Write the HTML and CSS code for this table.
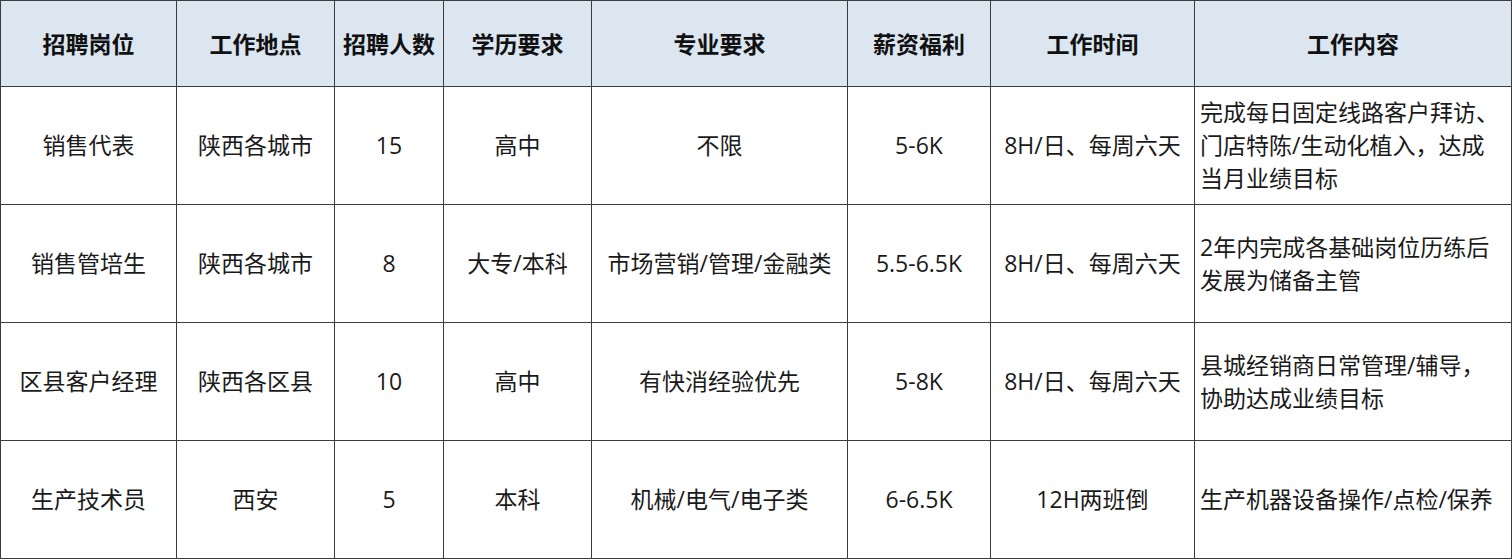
FILE: index.html
```html
<!DOCTYPE html>
<html lang="zh-CN">
<head>
<meta charset="utf-8">
<title>招聘岗位</title>
<link rel="stylesheet" href="styles.css">
</head>
<body>
<table class="jobs">
  <colgroup>
    <col class="c1"><col class="c2"><col class="c3"><col class="c4">
    <col class="c5"><col class="c6"><col class="c7"><col class="c8">
  </colgroup>
  <thead>
    <tr>
      <th>招聘岗位</th>
      <th>工作地点</th>
      <th>招聘人数</th>
      <th>学历要求</th>
      <th>专业要求</th>
      <th class="soft">薪资福利</th>
      <th>工作时间</th>
      <th class="soft">工作内容</th>
    </tr>
  </thead>
  <tbody>
    <tr>
      <td>销售代表</td>
      <td>陕西各城市</td>
      <td>15</td>
      <td>高中</td>
      <td>不限</td>
      <td class="soft">5-6K</td>
      <td>8H/日、每周六天</td>
      <td class="soft desc">完成每日固定线路客户拜访、门店特陈/生动化植入，达成当月业绩目标</td>
    </tr>
    <tr>
      <td>销售管培生</td>
      <td>陕西各城市</td>
      <td>8</td>
      <td>大专/本科</td>
      <td>市场营销/管理/金融类</td>
      <td class="soft">5.5-6.5K</td>
      <td>8H/日、每周六天</td>
      <td class="soft desc">2年内完成各基础岗位历练后发展为储备主管</td>
    </tr>
    <tr>
      <td>区县客户经理</td>
      <td>陕西各区县</td>
      <td>10</td>
      <td>高中</td>
      <td>有快消经验优先</td>
      <td class="soft">5-8K</td>
      <td>8H/日、每周六天</td>
      <td class="soft desc">县城经销商日常管理/辅导，协助达成业绩目标</td>
    </tr>
    <tr>
      <td>生产技术员</td>
      <td>西安</td>
      <td>5</td>
      <td>本科</td>
      <td>机械/电气/电子类</td>
      <td class="soft">6-6.5K</td>
      <td>12H两班倒</td>
      <td class="soft desc">生产机器设备操作/点检/保养</td>
    </tr>
  </tbody>
</table>
</body>
</html>
```

FILE: styles.css
```css
html, body {
  margin: 0;
  padding: 0;
  background: #ffffff;
}

body {
  font-family: "Open Sans", "Noto Sans CJK SC", sans-serif;
  color: #1a1a1a;
}

.jobs {
  border-collapse: collapse;
  table-layout: fixed;
  width: 1511px;
}

.c1 { width: 176px; }
.c2 { width: 158px; }
.c3 { width: 109px; }
.c4 { width: 148px; }
.c5 { width: 256px; }
.c6 { width: 143px; }
.c7 { width: 204px; }
.c8 { width: 317px; }

.jobs th,
.jobs td {
  border: 1px solid #3c3c3c;
  text-align: center;
  vertical-align: middle;
  padding: 0 2px;
  font-size: 23px;
  line-height: 33px;
}

.jobs th {
  height: 85px;
  background: #dce6f1;
  font-weight: 700;
  color: #111111;
  font-family: "Noto Sans CJK SC", sans-serif;
}

.jobs td {
  height: 117px;
  font-weight: 400;
}

.jobs .soft {
  border-left-color: #7a7a7a;
}

.jobs td.desc {
  text-align: left;
  padding: 0 4px 0 5px;
}
```
